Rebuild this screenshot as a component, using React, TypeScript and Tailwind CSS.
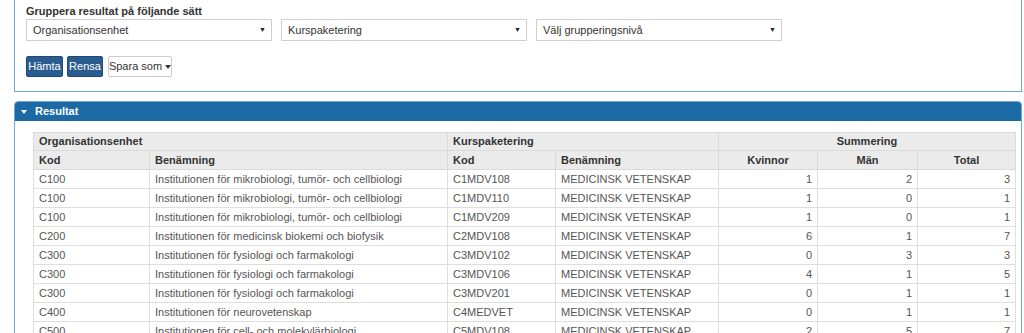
import React from 'react';

type Row = { org: string; name: string; kurs: string; kvinnor: number; man: number; total: number };

const INST_MIKRO = 'Institutionen för mikrobiologi, tumör- och cellbiologi';
const INST_FYS = 'Institutionen för fysiologi och farmakologi';
const MV = 'MEDICINSK VETENSKAP';

const ROWS: Row[] = [
  { org: 'C100', name: INST_MIKRO, kurs: 'C1MDV108', kvinnor: 1, man: 2, total: 3 },
  { org: 'C100', name: INST_MIKRO, kurs: 'C1MDV110', kvinnor: 1, man: 0, total: 1 },
  { org: 'C100', name: INST_MIKRO, kurs: 'C1MDV209', kvinnor: 1, man: 0, total: 1 },
  { org: 'C200', name: 'Institutionen för medicinsk biokemi och biofysik', kurs: 'C2MDV108', kvinnor: 6, man: 1, total: 7 },
  { org: 'C300', name: INST_FYS, kurs: 'C3MDV102', kvinnor: 0, man: 3, total: 3 },
  { org: 'C300', name: INST_FYS, kurs: 'C3MDV106', kvinnor: 4, man: 1, total: 5 },
  { org: 'C300', name: INST_FYS, kurs: 'C3MDV201', kvinnor: 0, man: 1, total: 1 },
  { org: 'C400', name: 'Institutionen för neurovetenskap', kurs: 'C4MEDVET', kvinnor: 0, man: 1, total: 1 },
  { org: 'C500', name: 'Institutionen för cell- och molekylärbiologi', kurs: 'C5MDV108', kvinnor: 2, man: 5, total: 7 },
];

const Select = ({ label }: { label: string }) => (
  <div className="w-[246px] h-[22px] flex items-center justify-between border border-[#cfcfcf] bg-white pl-[6px] pr-[5px] text-[11px] text-[#333]">
    <span>{label}</span>
    <span className="text-[7px] text-[#222]">▼</span>
  </div>
);

const th = 'border border-[#dadada] px-[5px] font-bold text-[#333]';
const td = 'border border-[#dedede] px-[5px] text-[#555]';

const App: React.FC = () => {
  return (
    <div className="min-h-screen bg-white" style={{ fontFamily: '"Liberation Sans", Arial, sans-serif' }}>
      <div className="ml-[14px] w-[1008px]">
        {/* Grouping panel */}
        <div className="border border-t-0 border-[#6aa9d8] pl-[11px] pt-[4px] pb-[14px]">
          <div className="text-[11px] font-bold text-[#333] leading-[15px]">Gruppera resultat på följande sätt</div>
          <div className="flex gap-[9px]">
            <Select label="Organisationsenhet" />
            <Select label="Kurspaketering" />
            <Select label="Välj grupperingsnivå" />
          </div>
          <div className="flex items-center mt-[15px] text-[11px]">
            <button className="h-[21px] w-[37px] bg-[#2b5c8f] border border-[#1f4873] text-white rounded-[2px]">Hämta</button>
            <button className="h-[21px] w-[36px] ml-[4px] bg-[#2b5c8f] border border-[#1f4873] text-white rounded-[2px]">Rensa</button>
            <button className="h-[21px] w-[64px] ml-[5px] bg-white border border-[#cccccc] text-[#333] rounded-[2px] flex items-center justify-center gap-[3px] whitespace-nowrap px-0">
              <span>Spara som</span>
              <span className="inline-block w-0 h-0 border-l-[3px] border-r-[3px] border-t-[4px] border-l-transparent border-r-transparent border-t-[#333]" />
            </button>
          </div>
        </div>

        {/* Result panel */}
        <div className="mt-[9px] border border-[#6aa9d8] rounded-t-[4px]">
          <div className="h-[19px] bg-[#1c6aa3] rounded-t-[3px] flex items-center pl-[6px] text-white text-[11px] font-bold">
            <span className="inline-block w-0 h-0 border-l-[3px] border-r-[3px] border-t-[4px] border-l-transparent border-r-transparent border-t-white" />
            <span className="ml-[8px]">Resultat</span>
          </div>
          <div className="pl-[18px] pr-[5px] pt-[11px] pb-[12px]">
            <table className="w-[982px] table-fixed border-collapse text-[11px]">
              <colgroup>
                <col className="w-[116px]" />
                <col className="w-[298px]" />
                <col className="w-[108px]" />
                <col className="w-[163px]" />
                <col className="w-[99px]" />
                <col className="w-[100px]" />
                <col className="w-[98px]" />
              </colgroup>
              <thead className="bg-[#ebebeb]">
                <tr className="h-[18px]">
                  <th colSpan={2} className={`${th} text-left`}>Organisationsenhet</th>
                  <th colSpan={2} className={`${th} text-left`}>Kurspaketering</th>
                  <th colSpan={3} className={`${th} text-center`}>Summering</th>
                </tr>
                <tr className="h-[19px]">
                  <th className={`${th} text-left`}>Kod</th>
                  <th className={`${th} text-left`}>Benämning</th>
                  <th className={`${th} text-left`}>Kod</th>
                  <th className={`${th} text-left`}>Benämning</th>
                  <th className={`${th} text-center`}>Kvinnor</th>
                  <th className={`${th} text-center`}>Män</th>
                  <th className={`${th} text-center`}>Total</th>
                </tr>
              </thead>
              <tbody>
                {ROWS.map((r, i) => (
                  <tr key={i} className="h-[19px]">
                    <td className={td}>{r.org}</td>
                    <td className={td}>{r.name}</td>
                    <td className={td}>{r.kurs}</td>
                    <td className={td}>{MV}</td>
                    <td className={`${td} text-right`}>{r.kvinnor}</td>
                    <td className={`${td} text-right`}>{r.man}</td>
                    <td className={`${td} text-right`}>{r.total}</td>
                  </tr>
                ))}
              </tbody>
            </table>
          </div>
        </div>
      </div>
    </div>
  );
};

export default App;
